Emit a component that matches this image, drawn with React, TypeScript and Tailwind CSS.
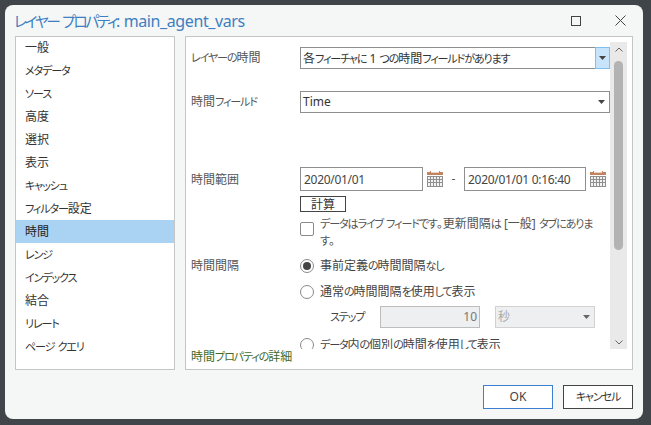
const font = { fontFamily: '"Noto Sans", "Noto Sans CJK JP", sans-serif' };

const navItems = [
  "一般",
  "メタデータ",
  "ソース",
  "高度",
  "選択",
  "表示",
  "キャッシュ",
  "フィルター設定",
  "時間",
  "レンジ",
  "インデックス",
  "結合",
  "リレート",
  "ページ クエリ",
];

// kana is much narrower than kanji in the dialog's UI font
function Jp({ text, tight }: { text: string; tight?: boolean }) {
  return (
    <>
      {text.split(/([\u3040-\u30ff]+)/).map((part, i) =>
        i % 2 === 1 ? (
          <span key={i} className={tight ? "text-[0.92em] tracking-[-0.16em]" : "text-[0.92em] tracking-[-0.1em]"}>
            {part}
          </span>
        ) : (
          part
        ),
      )}
    </>
  );
}

function Caret({ color = "#444" }: { color?: string }) {
  return (
    <svg width="7" height="4" viewBox="0 0 7 4">
      <path d="M0 0h7L3.5 4z" fill={color} />
    </svg>
  );
}

function CalendarIcon() {
  return (
    <svg width="16" height="16" viewBox="0 0 16 16" className="shrink-0">
      <rect x="0" y="1" width="16" height="3" fill="#c4835f" />
      <rect x="3" y="0" width="1" height="2" fill="#c4835f" />
      <rect x="12" y="0" width="1" height="2" fill="#c4835f" />
      <rect x="4" y="1" width="8" height="1" fill="#e9d3c4" />
      <rect x="0" y="5" width="16" height="11" fill="#8f8f8f" />
      <path
        d="M1 6h2v2H1zM4 6h2v2H4zM7 6h2v2H7zM10 6h2v2h-2zM13 6h2v2h-2zM1 9h2v2H1zM4 9h2v2H4zM7 9h2v2H7zM10 9h2v2h-2zM13 9h2v2h-2zM1 12h2v3H1zM4 12h2v3H4zM7 12h2v3H7zM10 12h2v3h-2zM13 12h2v3h-2z"
        fill="#f2f2f2"
      />
    </svg>
  );
}

function Radio({ checked }: { checked?: boolean }) {
  return (
    <span className="w-[14px] h-[14px] rounded-full border border-[#8a8a8a] bg-white flex items-center justify-center shrink-0">
      {checked && <span className="w-[8px] h-[8px] rounded-full bg-[#444]" />}
    </span>
  );
}

function Section({
  label,
  className,
  children,
}: {
  label: string;
  className?: string;
  children: React.ReactNode;
}) {
  return (
    <div className={`flex ${className ?? ""}`}>
      <div className="w-[109px] shrink-0 text-[#555] leading-[22px] whitespace-nowrap">
        <Jp text={label} />
      </div>
      <div className="flex-1 min-w-0">{children}</div>
    </div>
  );
}

export default function App() {
  return (
    <div
      className="w-[651px] h-[425px] bg-[#3f4549] pt-[5px] pl-[5px] pr-[8px] pb-[6px] text-[12px] overflow-hidden [font-feature-settings:'palt']"
      style={font}
    >
      <div className="w-full h-full bg-[#f5f6f6] rounded-lg flex flex-col px-[10px]">
        <div className="h-[31px] shrink-0 flex items-center justify-between">
          <span className="text-[16px] text-[#3d7fc1] -ml-[1px] whitespace-nowrap tracking-[-0.4px]">
            <Jp text="レイヤー プロパティ: main_agent_vars" tight />
          </span>
          <div className="flex items-center gap-[34px] pr-[7px]">
            <span className="w-[10px] h-[10px] border border-[#444]" />
            <svg width="11" height="11" viewBox="0 0 11 11">
              <path d="M0.5 0.5l10 10M10.5 0.5l-10 10" stroke="#444" strokeWidth="1" fill="none" />
            </svg>
          </div>
        </div>

        <div className="h-[334px] shrink-0 flex gap-[10px]">
          <div className="w-[160px] shrink-0 bg-white border border-[#c4c6c6]">
            <div className="-mt-[1px]">
              {navItems.map((item) => (
                <div
                  key={item}
                  className={`h-[23px] pl-[9px] pt-[1px] flex items-center whitespace-nowrap ${
                    item === "時間" ? "bg-[#aad2f2] text-[#222]" : "text-[#333]"
                  }`}
                >
                  <span>
                    <Jp text={item} />
                  </span>
                </div>
              ))}
            </div>
          </div>

          <div className="flex-1 bg-white border border-[#c4c6c6] pl-[5px] pt-[5px] flex flex-col min-w-0">
            <div className="h-[307px] shrink-0 flex overflow-hidden pr-[5px]">
              <div className="flex-none w-[419px] overflow-hidden pt-[5px]">
                <Section label="レイヤーの時間" className="h-[44px]">
                  <div className="h-[22px] flex border border-[#8f8f8f] bg-white">
                    <span className="flex-1 pl-[2px] leading-[22px] text-[#333] whitespace-nowrap">
                      <Jp text="各フィーチャに 1 つの時間フィールドがあります" />
                    </span>
                    <span className="w-[15px] -my-[1px] -mr-[1px] bg-[#c8e4fb] border border-[#7fc0f2] flex items-center justify-center">
                      <Caret />
                    </span>
                  </div>
                </Section>

                <Section label="時間フィールド" className="h-[76px]">
                  <div className="h-[22px] flex items-center justify-between border border-[#8f8f8f] pl-[2px] pr-[4px] text-[#333]">
                    <span className="leading-[22px]">Time</span>
                    <Caret />
                  </div>
                </Section>

                <Section label="時間範囲" className="h-[89px] [&>div:first-child]:pt-[2px]">
                  <div className="flex items-center">
                    <div className="w-[123px] h-[24px] border border-[#8f8f8f] pl-[3px] leading-[24px] text-[#444] shrink-0 tracking-[-0.3px]">
                      2020/01/01
                    </div>
                    <div className="ml-[4px]">
                      <CalendarIcon />
                    </div>
                    <span className="w-[21px] text-center text-[#555]">-</span>
                    <div className="w-[122px] h-[24px] border border-[#8f8f8f] pl-[3px] leading-[24px] text-[#444] shrink-0 whitespace-nowrap tracking-[-0.3px]">
                      2020/01/01 0:16:40
                    </div>
                    <div className="ml-[4px]">
                      <CalendarIcon />
                    </div>
                  </div>
                  <div className="mt-[5px] w-[46px] h-[16px] border border-[#444] pt-[1px] flex items-center justify-center leading-none text-[#333]">
                    計算
                  </div>
                  <div className="mt-[3px] flex gap-[6px] items-start">
                    <span className="w-[14px] h-[14px] mt-[7px] rounded-[2px] border border-[#8a8a8a] bg-white shrink-0" />
                    <p className="text-[#555] leading-[17px] w-[290px] whitespace-nowrap">
                      <Jp text="データはライブ フィードです。更新間隔は [一般] タブにありま" />
                      <br />
                      <Jp text="す。" />
                    </p>
                  </div>
                </Section>

                <Section label="時間間隔" className="[&>div:first-child]:-mt-[1px]">
                  <div className="h-[20px] flex items-center gap-[6px] text-[#444] whitespace-nowrap">
                    <Radio checked />
                    <span>
                      <Jp text="事前定義の時間間隔なし" />
                    </span>
                  </div>
                  <div className="mt-[6px] h-[20px] flex items-center gap-[6px] text-[#444] whitespace-nowrap">
                    <Radio />
                    <span>
                      <Jp text="通常の時間間隔を使用して表示" />
                    </span>
                  </div>
                  <div className="mt-[4px] flex items-center pl-[30px]">
                    <span className="w-[50px] text-[#444]">
                      <Jp text="ステップ" />
                    </span>
                    <div className="w-[100px] h-[22px] bg-[#eeeff0] border border-[#bdbdbd] text-right pr-[2px] leading-[20px] text-[#777]">
                      10
                    </div>
                    <div className="ml-[15px] w-[100px] h-[22px] bg-[#eeeff0] border border-[#d2d2d2] flex items-center justify-between pl-[2px] pr-[4px] text-[#aaa]">
                      <span>秒</span>
                      <Caret color="#666" />
                    </div>
                  </div>
                  <div className="mt-[7px] h-[20px] flex items-center gap-[6px] text-[#444] whitespace-nowrap">
                    <Radio />
                    <span>
                      <Jp text="データ内の個別の時間を使用して表示" />
                    </span>
                  </div>
                </Section>
              </div>

              <div className="w-[17px] shrink-0 bg-[#e9e9e9] flex flex-col items-center pt-[5px] pb-[4px]">
                <svg width="8" height="5" viewBox="0 0 8 5" className="shrink-0">
                  <path d="M0.5 4.5L4 1l3.5 3.5" stroke="#666" fill="none" />
                </svg>
                <div className="w-[9px] h-[189px] mt-[9px] rounded-full bg-[#b3b3b3] shrink-0" />
                <div className="flex-1" />
                <svg width="8" height="5" viewBox="0 0 8 5" className="shrink-0">
                  <path d="M0.5 0.5L4 4l3.5-3.5" stroke="#666" fill="none" />
                </svg>
              </div>
            </div>
            <div className="text-[#3f6b2b] leading-[16px] whitespace-nowrap">
              <Jp text="時間プロパティの詳細" />
            </div>
          </div>
        </div>

        <div className="flex-1 flex items-start justify-end gap-[10px] pt-[15px]">
          <button className="w-[70px] h-[24px] bg-white border border-[#3d7fd0] text-[#444]">OK</button>
          <button className="w-[70px] h-[24px] bg-white border border-[#444] text-[#333]">
            <Jp text="キャンセル" />
          </button>
        </div>
      </div>
    </div>
  );
}
